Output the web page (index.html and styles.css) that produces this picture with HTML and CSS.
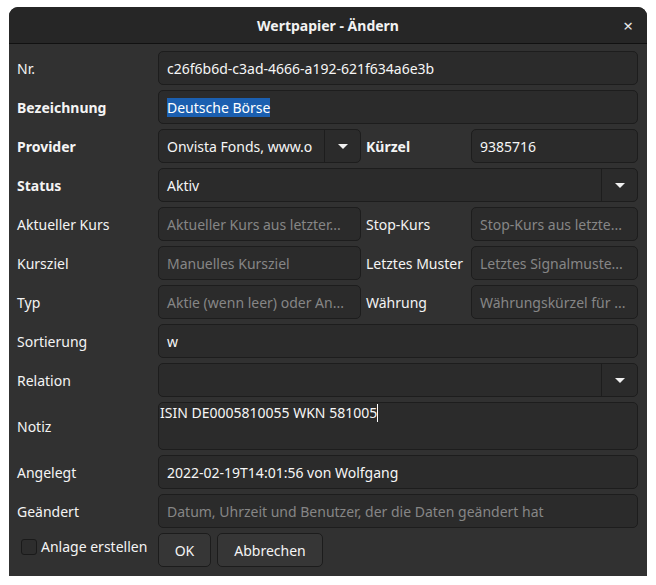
FILE: index.html
```html
<!DOCTYPE html>
<html>
<head>
<meta charset="utf-8">
<link rel="stylesheet" href="styles.css">
</head>
<body>
<div class="window">
  <div class="titlebar">
    <span class="title">Wertpapier - Ändern</span>
    <span class="close">×</span>
  </div>
  <div class="form">
    <label class="lbl">Nr.</label>
    <div class="entry full">c26f6b6d-c3ad-4666-a192-621f634a6e3b</div>

    <label class="lbl bold">Bezeichnung</label>
    <div class="entry full"><span class="sel">Deutsche Börse</span></div>

    <label class="lbl bold">Provider</label>
    <div class="combo"><span class="ctext">Onvista Fonds, www.o</span><span class="cbtn"><span class="arrow"></span></span></div>
    <label class="lbl bold">Kürzel</label>
    <div class="entry">9385716</div>

    <label class="lbl bold">Status</label>
    <div class="combo full"><span class="ctext">Aktiv</span><span class="cbtn"><span class="arrow"></span></span></div>

    <label class="lbl">Aktueller Kurs</label>
    <div class="entry ph">Aktueller Kurs aus letzter...</div>
    <label class="lbl">Stop-Kurs</label>
    <div class="entry ph">Stop-Kurs aus letzte...</div>

    <label class="lbl">Kursziel</label>
    <div class="entry ph">Manuelles Kursziel</div>
    <label class="lbl">Letztes Muster</label>
    <div class="entry ph">Letztes Signalmuste...</div>

    <label class="lbl">Typ</label>
    <div class="entry ph">Aktie (wenn leer) oder An...</div>
    <label class="lbl">Währung</label>
    <div class="entry ph">Währungskürzel für ...</div>

    <label class="lbl">Sortierung</label>
    <div class="entry full">w</div>

    <label class="lbl">Relation</label>
    <div class="combo full"><span class="ctext"></span><span class="cbtn"><span class="arrow"></span></span></div>

    <label class="lbl">Notiz</label>
    <div class="textarea full">ISIN DE0005810055 WKN 581005<span class="caret"></span></div>

    <label class="lbl">Angelegt</label>
    <div class="entry full">2022-02-19T14:01:56 von Wolfgang</div>

    <label class="lbl">Geändert</label>
    <div class="entry full ph">Datum, Uhrzeit und Benutzer, der die Daten geändert hat</div>

    <label class="check"><span class="box"></span>Anlage erstellen</label>
    <div class="buttons">
      <button class="btn ok">OK</button>
      <button class="btn cancel">Abbrechen</button>
    </div>
  </div>
</div>
</body>
</html>
```

FILE: styles.css
```css
html, body {
  margin: 0;
  padding: 0;
  background: #ffffff;
}
body {
  font-family: "Noto Sans", "DejaVu Sans", sans-serif;
  font-size: 14px;
  color: #f6f6f6;
}
.window {
  margin: 7px 0 0 9px;
  width: 638px;
  height: 569px;
  background: #313131;
  border-radius: 9px 9px 0 0;
  overflow: hidden;
  display: flex;
  flex-direction: column;
}
.titlebar {
  height: 36px;
  background: #262626;
  border-bottom: 1px solid #111111;
  display: flex;
  align-items: center;
  justify-content: center;
  position: relative;
  flex: none;
}
.title {
  font-weight: bold;
  font-size: 14px;
  color: #f2f2f2;
}
.close {
  position: absolute;
  right: 14px;
  top: 7px;
  font-size: 17px;
  color: #e8e8e8;
}
.form {
  display: grid;
  grid-template-columns: 136px 203px 100px 167px;
  grid-template-rows: repeat(9, 34px) 48px repeat(3, 34px);
  column-gap: 5px;
  row-gap: 5px;
  padding: 7px 9px 8px 8px;
}
.lbl {
  display: flex;
  align-items: center;
  white-space: nowrap;
  color: #f4f4f4;
}
.bold { font-weight: bold; }
.entry, .combo, .textarea {
  background: #2b2b2b;
  border: 1px solid #1d1d1d;
  border-radius: 5px;
  box-sizing: border-box;
  height: 34px;
  display: flex;
  align-items: center;
  white-space: nowrap;
  overflow: hidden;
}
.entry { padding: 0 8px; }
.full { grid-column: 2 / 5; }
.ph { color: #868686; }
.sel {
  background: #1b5fb0;
  color: #ffffff;
}
.combo { padding: 0; }
.ctext { flex: 1; padding: 0 8px; }
.cbtn {
  width: 35px;
  height: 100%;
  border-left: 1px solid #1d1d1d;
  display: flex;
  align-items: center;
  justify-content: center;
  flex: none;
}
.arrow {
  width: 0;
  height: 0;
  border-left: 5px solid transparent;
  border-right: 5px solid transparent;
  border-top: 5px solid #f0f0f0;
}
.textarea {
  height: 48px;
  align-items: flex-start;
  padding: 0 1px;
  line-height: 20px;
}
.caret {
  display: inline-block;
  width: 1px;
  height: 18px;
  background: #ffffff;
  vertical-align: top;
  margin-top: 1px;
}
.check {
  display: flex;
  align-items: center;
  gap: 4px;
  padding-left: 4px;
  color: #f4f4f4;
  white-space: nowrap;
  margin-top: -7px;
}
.box {
  width: 14px;
  height: 14px;
  border: 1px solid #1a1a1a;
  border-radius: 3px;
  background: #2d2d2d;
  flex: none;
}
.buttons {
  grid-column: 2 / 5;
  display: flex;
  gap: 6px;
}
.btn {
  font-family: inherit;
  font-size: 14px;
  color: #f4f4f4;
  background: #363636;
  border: 1px solid #1c1c1c;
  border-radius: 5px;
  height: 34px;
  padding: 0;
}
.ok { width: 53px; }
.cancel { width: 106px; }
```
